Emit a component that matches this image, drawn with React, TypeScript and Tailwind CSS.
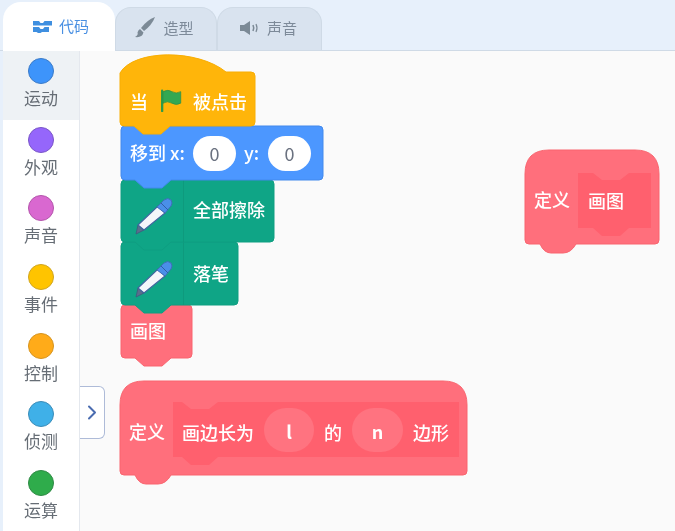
import { ChevronRight } from "lucide-react";
import type { ReactNode } from "react";

const font = "font-['Noto_Sans_CJK_SC','Noto_Sans',sans-serif]";

const categories = [
  { label: "运动", color: "bg-[#3d94fb]", border: "border-[#3a7bc8]", active: true },
  { label: "外观", color: "bg-[#9566fb]", border: "border-[#7a55c8]" },
  { label: "声音", color: "bg-[#d968d0]", border: "border-[#b455ac]" },
  { label: "事件", color: "bg-[#ffc400]", border: "border-[#d0a520]" },
  { label: "控制", color: "bg-[#ffab19]", border: "border-[#d69420]" },
  { label: "侦测", color: "bg-[#3fb0e8]", border: "border-[#3b8cb8]" },
  { label: "运算", color: "bg-[#2fac4b]", border: "border-[#2f8a45]" },
];

// bottom edge with the connector tab, right to left, ending at the left corner
const bottom = (w: number, h: number, tx = 14) =>
  `L${w} ${h - 4} Q${w} ${h} ${w - 4} ${h} L${tx + 36} ${h} L${tx + 27} ${h + 8} L${tx + 9} ${h + 8} L${tx} ${h} L4 ${h} Q0 ${h} 0 ${h - 4}`;

const stackPath = (w: number, h: number) =>
  `M0 4 Q0 0 4 0 L${w - 4} 0 Q${w} 0 ${w} 4 ${bottom(w, h)} Z`;

const hatPath = (w: number, h: number) =>
  `M0 18 C14 -6 78 -6 106 17 L${w - 4} 17 Q${w} 17 ${w} 21 ${bottom(w, h)} Z`;

const definePath = (w: number, h: number) =>
  `M0 24 Q0 0 24 0 L${w - 24} 0 Q${w} 0 ${w} 24 L${w} ${h - 4} Q${w} ${h} ${w - 4} ${h} L51 ${h} Q46 ${h + 9} 38 ${h + 9} L26 ${h + 9} Q19 ${h + 9} 15 ${h} L4 ${h} Q0 ${h} 0 ${h - 4} Z`;

const innerPath = (w: number, h: number, tx: number) =>
  `M0 0 L${tx} 0 L${tx + 9} 7 L${tx + 27} 7 L${tx + 36} 0 L${w} 0 L${w} ${h} L${tx + 36} ${h} L${tx + 27} ${h + 8} L${tx + 9} ${h + 8} L${tx} ${h} L0 ${h} Z`;

function Block({
  className,
  d,
  w,
  h,
  fill,
  stroke,
  children,
}: {
  className: string;
  d: string;
  w: number;
  h: number;
  fill: string;
  stroke: string;
  children?: ReactNode;
}) {
  return (
    <div className={`absolute ${className}`}>
      <svg
        className="absolute left-0 top-0 overflow-visible"
        width={w}
        height={h + 10}
        viewBox={`0 0 ${w} ${h + 10}`}
      >
        <path d={d} fill={fill} stroke={stroke} strokeWidth="1" strokeLinejoin="round" />
      </svg>
      <div className="relative flex h-full items-center font-medium text-[18px] leading-none text-white">
        {children}
      </div>
    </div>
  );
}

function PenIcon() {
  return (
    <svg width="38" height="38" viewBox="0 0 38 38">
      <path d="M1 37 L3 28 L9 33 Z" fill="#5b6f8c" stroke="#40587c" strokeWidth="0.8" />
      <path d="M3 28 L23 9 L30 16 L9 33 Z" fill="#f4f6fa" stroke="#3f659f" strokeWidth="1.2" />
      <path d="M22 10 L29 3 Q33 0 36 3 Q38 6 36 9 L30 16 Z" fill="#4a8fe8" stroke="#3f6fb8" strokeWidth="1" />
      <path d="M26 6 L33 13" stroke="#2f5fa8" strokeWidth="1" />
    </svg>
  );
}

function FlagIcon() {
  return (
    <svg width="22" height="23" viewBox="0 0 24 26">
      <path d="M2 2 L2 25" stroke="#2f9a48" strokeWidth="2.6" strokeLinecap="round" />
      <path d="M3 3 Q9 0 13 3 Q18 6 23 3 L23 16 Q18 19 13 16 Q8 13 3 16 Z" fill="#33a852" stroke="#2c8f46" strokeWidth="0.8" />
    </svg>
  );
}

function CodeIcon() {
  return (
    <svg width="19" height="13" viewBox="0 0 19 13">
      <path d="M0 1 H6 L7.5 3 H10 L11.5 1 H19 V5.5 H0 Z" fill="#3f8fe0" />
      <path d="M0 7 H6 L7.5 9 H10 L11.5 7 H16 V12 H9 L7.5 13 H5 L3.5 12 H0 Z" fill="#3f8fe0" />
    </svg>
  );
}

function BrushIcon() {
  return (
    <svg width="22" height="22" viewBox="0 0 22 22">
      <path d="M21 0 Q18 8 10 14 L7 11 Q13 3 21 0 Z" fill="#7c8a96" />
      <path d="M6 12 L9.5 15.5 Q8 21 1 20 Q4.5 18 3.5 15.5 Q4 13 6 12 Z" fill="#7c8a96" />
    </svg>
  );
}

function SoundIcon() {
  return (
    <svg width="20" height="16" viewBox="0 0 20 16">
      <path d="M0 5 H4 L10 1 V15 L4 11 H0 Z" fill="#7c8a96" />
      <path d="M13 5 Q14.5 8 13 11" stroke="#7c8a96" strokeWidth="1.6" fill="none" />
      <path d="M16 4 Q18 8 16 12" stroke="#7c8a96" strokeWidth="1.2" fill="none" />
    </svg>
  );
}

function Tabs() {
  return (
    <div className="flex h-[51px] shrink-0 items-end border-b border-[#cfdae6] bg-[#e7f0fb] pl-[3px]">
      <div className="z-10 mb-[-1px] flex h-[49px] w-[112px] items-center justify-center gap-[7px] rounded-t-[18px] bg-white pl-[4px] text-[15px] text-[#4a90e2]">
        <CodeIcon />
        代码
      </div>
      <div className="flex h-[43px] w-[102px] items-center justify-center gap-[7px] rounded-t-[16px] border border-b-0 border-[#cfdae6] bg-[#d9e3ef] pb-[2px] pr-[4px] text-[15px] text-[#7d8a99]">
        <BrushIcon />
        造型
      </div>
      <div className="flex h-[43px] w-[105px] items-center justify-center gap-[7px] rounded-t-[16px] border border-b-0 border-[#cfdae6] bg-[#d9e3ef] pb-[2px] pr-[2px] text-[15px] text-[#7d8a99]">
        <SoundIcon />
        声音
      </div>
    </div>
  );
}

function Sidebar() {
  return (
    <div className="flex w-[77px] shrink-0 flex-col border-r border-[#e4e8ee] bg-white">
      {categories.map((c) => (
        <div
          key={c.label}
          className={`flex h-[68.7px] flex-col items-center pt-[7px] ${c.active ? "bg-[#eef2f5]" : ""}`}
        >
          <div className={`h-[26px] w-[26px] rounded-full border ${c.color} ${c.border}`} />
          <div className="mt-[1px] text-[17px] leading-[26px] text-[#666d75]">{c.label}</div>
        </div>
      ))}
    </div>
  );
}

function Oval({ className, children }: { className: string; children: ReactNode }) {
  return (
    <div className={`flex items-center justify-center rounded-full ${className}`}>{children}</div>
  );
}

function Canvas() {
  const green = "#0fa586";
  const greenLine = "#0f9e81";
  const red = "#ff6f7c";
  const redLine = "#f9656f";
  return (
    <div className="relative flex-1 bg-[#fafafa]">
      <button className="absolute left-0 top-[335px] flex h-[53px] w-[25px] items-center justify-center rounded-r-[6px] border border-l-0 border-[#aebbd8] bg-white text-[#4a6cb0]">
        <ChevronRight size={25} strokeWidth={2} />
      </button>

      {/* lowest blocks first, so that every tab lies over the block below it */}
      <Block className="left-[41px] top-[254px] h-[53px] w-[71px]" d={stackPath(71, 53)} w={71} h={53} fill={red} stroke={redLine}>
        <span className="pb-[3px] pl-[9px]">画图</span>
      </Block>
      <Block className="left-[41px] top-[191px] h-[63px] w-[117px]" d={stackPath(117, 63)} w={117} h={63} fill={green} stroke={greenLine}>
        <span className="ml-[14px] pt-[10px]"><PenIcon /></span>
        <span className="ml-[10px] h-[63px] w-px bg-[#0e9a7d]" />
        <span className="ml-[9px] pb-[2px]">落笔</span>
      </Block>
      <Block className="left-[41px] top-[129px] h-[62px] w-[153px]" d={stackPath(153, 62)} w={153} h={62} fill={green} stroke={greenLine}>
        <span className="ml-[14px] pt-[10px]"><PenIcon /></span>
        <span className="ml-[10px] h-[62px] w-px bg-[#0e9a7d]" />
        <span className="ml-[9px] pb-[4px]">全部擦除</span>
      </Block>
      <Block className="left-[41px] top-[75px] h-[54px] w-[202px]" d={stackPath(202, 54)} w={202} h={54} fill="#4c97ff" stroke="#4289ec">
        <span className="ml-[9px] whitespace-nowrap pb-[2px]">移到 x:</span>
        <Oval className="ml-[8px] h-[35px] w-[43px] shrink-0 bg-white font-normal text-[#6b7280]">0</Oval>
        <span className="ml-[8px] pb-[2px]">y:</span>
        <Oval className="ml-[9px] h-[35px] w-[43px] shrink-0 bg-white font-normal text-[#6b7280]">0</Oval>
      </Block>
      <Block className="left-[40px] top-[4px] h-[71px] w-[135px]" d={hatPath(135, 71)} w={135} h={71} fill="#ffb50a" stroke="#f8ae04">
        <div className="flex items-center pt-[20px]">
          <span className="ml-[10px]">当</span>
          <span className="ml-[12px]"><FlagIcon /></span>
          <span className="ml-[11px]">被点击</span>
        </div>
      </Block>

      <Block className="left-[40px] top-[330px] h-[94px] w-[347px]" d={definePath(347, 94)} w={347} h={94} fill={red} stroke={redLine}>
        <span className="ml-[9px] pt-[6px]">定义</span>
        <div className="relative ml-[8px] mt-[3px] h-[55px] w-[286px]">
          <svg className="absolute left-0 top-0 overflow-visible" width="286" height="63" viewBox="0 0 286 63">
            <path d={innerPath(286, 55, 9)} fill="#ff606e" />
          </svg>
          <div className="relative flex h-full items-center">
            <span className="ml-[9px] pt-[4px]">画边长为</span>
            <Oval className="ml-[10px] h-[44px] w-[50px] shrink-0 bg-[#ff7380] pt-[2px] font-semibold">l</Oval>
            <span className="ml-[10px] pt-[4px]">的</span>
            <Oval className="ml-[10px] h-[44px] w-[51px] shrink-0 bg-[#ff7380] pt-[2px] font-semibold">n</Oval>
            <span className="ml-[10px] pt-[4px]">边形</span>
          </div>
        </div>
      </Block>

      <Block className="left-[445px] top-[99px] h-[94px] w-[134px]" d={definePath(134, 94)} w={134} h={94} fill={red} stroke={redLine}>
        <span className="ml-[9px] pt-[4px]">定义</span>
        <div className="relative ml-[8px] mt-[6px] h-[55px] w-[73px]">
          <svg className="absolute left-0 top-0 overflow-visible" width="73" height="63" viewBox="0 0 73 63">
            <path d={innerPath(73, 55, 15)} fill="#ff606e" />
          </svg>
          <span className="relative flex h-full items-center pl-[10px]">画图</span>
        </div>
      </Block>
    </div>
  );
}

export default function App() {
  return (
    <div className={`flex h-[531px] w-[675px] flex-col overflow-hidden bg-[#e7f0fb] blur-[0.5px] ${font}`}>
      <Tabs />
      <div className="flex flex-1 pl-[3px]">
        <Sidebar />
        <Canvas />
      </div>
    </div>
  );
}
